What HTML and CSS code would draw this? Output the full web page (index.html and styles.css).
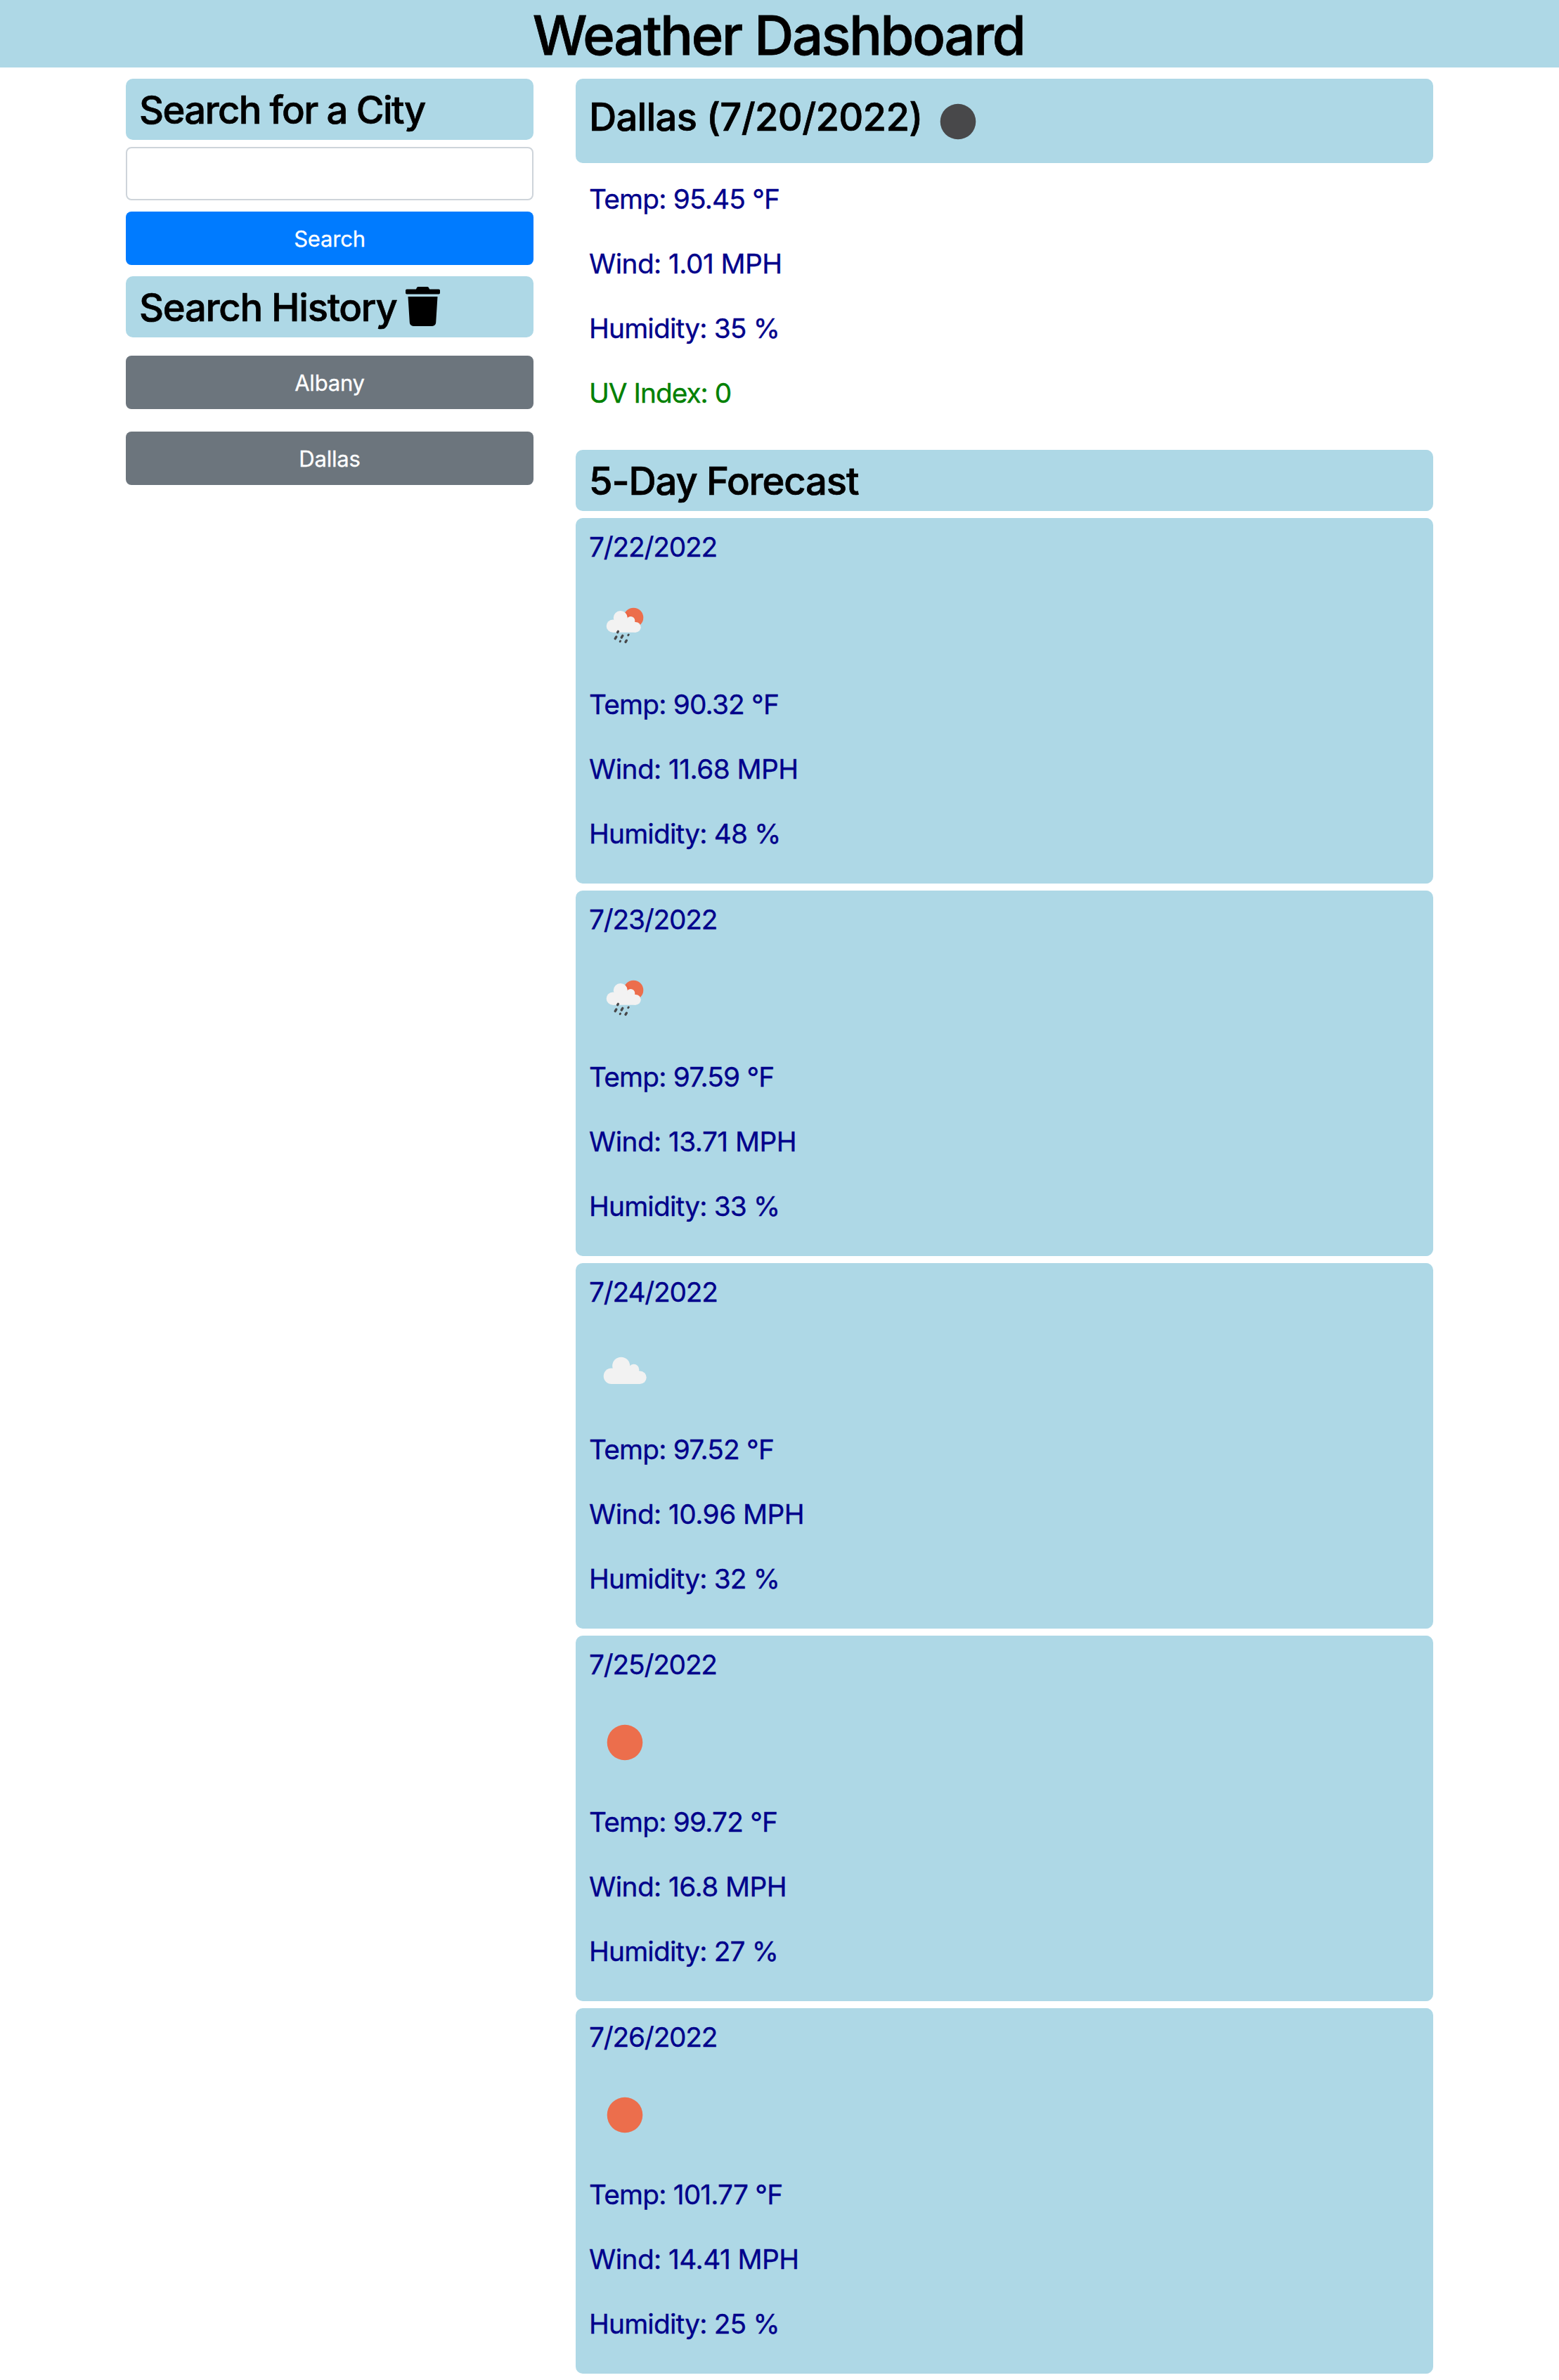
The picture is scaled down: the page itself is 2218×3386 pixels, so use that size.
FILE: index.html
```html
<!DOCTYPE html>
<html lang="en">
<head>
  <meta charset="utf-8">
  <title>Weather Dashboard</title>
  <link rel="stylesheet" href="styles.css">
</head>
<body>
  <svg width="0" height="0" class="sprite" aria-hidden="true">
    <defs>
      <linearGradient id="sunShade" x1="1" y1="0" x2="0" y2="1">
        <stop offset="0.5" stop-color="#ec6e4c"/>
        <stop offset="0.75" stop-color="#ee4f2c"/>
      </linearGradient>
      <g id="cloud" fill="#f2f2f2">
        <circle cx="31" cy="58.7" r="11.3"/>
        <circle cx="44.7" cy="44.2" r="12.5"/>
        <circle cx="62.7" cy="49.3" r="7.6"/>
        <circle cx="71.5" cy="60.8" r="9.2"/>
        <path d="M31 70V50l6-3h27l7.5 5v18z"/>
      </g>
    </defs>
    <symbol id="clear" viewBox="0 0 100 100"><circle cx="50" cy="50" r="25.3" fill="#ec6e4c"/></symbol>
    <symbol id="clear-night" viewBox="0 0 100 100"><circle cx="50" cy="50" r="25.3" fill="#48484a"/></symbol>
    <symbol id="cloudy" viewBox="0 0 100 100"><use href="#cloud"/></symbol>
    <symbol id="rain" viewBox="0 0 100 100">
      <circle cx="62.3" cy="39.7" r="14" fill="url(#sunShade)"/>
      <use href="#cloud" transform="translate(7.9 4.5) scale(.803)"/>
      <g stroke="#48484a" stroke-width="3.4" stroke-linecap="round">
        <path d="M40.4 59.4l-.8 1.2M37.8 67l-1.6 2.6M46.8 65.4l-1.6 2.6M52.4 72.2l-1.4 2.2"/>
        <path d="M55.3 63.9l-.6.9M43.6 72.9l-.5.8" stroke-width="2.8"/>
      </g>
    </symbol>
  </svg>

  <header class="title"><h1>Weather Dashboard</h1></header>

  <main class="container">
    <aside class="sidebar">
      <h3 class="panel search-title">Search for a City</h3>
      <input class="city-input" type="text" aria-label="City">
      <button class="btn btn-primary">Search</button>
      <h3 class="panel history-title">Search History
        <svg class="trash" viewBox="0 0 448 512"><path d="M432 32H312l-9.4-18.7A24 24 0 0 0 281.1 0H166.8a23.72 23.72 0 0 0-21.4 13.3L136 32H16A16 16 0 0 0 0 48v32a16 16 0 0 0 16 16h416a16 16 0 0 0 16-16V48a16 16 0 0 0-16-16zM53.2 467a48 48 0 0 0 47.9 45h245.8a48 48 0 0 0 47.9-45L416 128H32z"/></svg>
      </h3>
      <div class="history">
        <button class="btn btn-secondary">Albany</button>
        <button class="btn btn-secondary">Dallas</button>
      </div>
    </aside>

    <section class="weather">
      <h3 class="panel current-title">Dallas (7/20/2022)<svg class="icon"><use href="#clear-night"/></svg></h3>
      <div class="current">
        <p class="temp">Temp: 95.45 °F</p>
        <p class="wind">Wind: 1.01 MPH</p>
        <p>Humidity: 35 %</p>
        <p class="uv">UV Index: 0</p>
      </div>
      <h3 class="panel forecast-title">5-Day Forecast</h3>
      <article class="panel day">
        <p class="date">7/22/2022</p>
        <svg class="icon"><use href="#rain"/></svg>
        <p class="temp">Temp: 90.32 °F</p>
        <p class="wind">Wind: 11.68 MPH</p>
        <p>Humidity: 48 %</p>
      </article>
      <article class="panel day">
        <p class="date">7/23/2022</p>
        <svg class="icon"><use href="#rain"/></svg>
        <p class="temp">Temp: 97.59 °F</p>
        <p class="wind">Wind: 13.71 MPH</p>
        <p>Humidity: 33 %</p>
      </article>
      <article class="panel day">
        <p class="date">7/24/2022</p>
        <svg class="icon"><use href="#cloudy"/></svg>
        <p class="temp">Temp: 97.52 °F</p>
        <p class="wind">Wind: 10.96 MPH</p>
        <p>Humidity: 32 %</p>
      </article>
      <article class="panel day">
        <p class="date">7/25/2022</p>
        <svg class="icon"><use href="#clear"/></svg>
        <p class="temp">Temp: 99.72 °F</p>
        <p class="wind">Wind: 16.8 MPH</p>
        <p>Humidity: 27 %</p>
      </article>
      <article class="panel day">
        <p class="date">7/26/2022</p>
        <svg class="icon"><use href="#clear"/></svg>
        <p class="temp">Temp: 101.77 °F</p>
        <p class="wind">Wind: 14.41 MPH</p>
        <p>Humidity: 25 %</p>
      </article>
    </section>
  </main>
</body>
</html>
```
FILE: styles.css
```css
* { box-sizing: border-box; }

body {
  margin: 0;
  background: #fff;
  color: #000;
  font-family: Inter, "Liberation Sans", sans-serif;
}

h1, h3, p { margin: 0; }

.sprite { display: block; height: 0; }

.title {
  height: 96px;
  background: #aed8e6;
  text-align: center;
}

.title h1 {
  padding-right: 3px;
  font-size: 77.6px;
  font-weight: 500;
  line-height: 100px;
  letter-spacing: -2.28px;
  -webkit-text-stroke: 0.8px currentColor;
}

.container {
  display: grid;
  grid-template-columns: 580px 1220px;
  column-gap: 60px;
  align-items: start;
  width: 1860px;
  margin: 16px auto 0;
}

.sidebar, .weather, .history {
  display: flex;
  flex-direction: column;
}

.panel {
  padding: 10px 20px;
  border-radius: 10px;
  background: #aed8e6;
}

h3 {
  height: 87px;
  font-size: 54.3px;
  font-weight: 500;
  line-height: 69px;
  text-indent: -1px;
  white-space: nowrap;
  -webkit-text-stroke: 0.7px currentColor;
}

.search-title { letter-spacing: -1.6px; }

.city-input {
  height: 76px;
  margin-top: 10px;
  padding: 12px 24px;
  border: 2px solid #ced4da;
  border-radius: 8px;
  background: #fff;
  font: inherit;
}

.btn {
  height: 76px;
  padding: 0;
  border: 0;
  border-radius: 8px;
  color: #fff;
  font-family: inherit;
  font-size: 31px;
  line-height: 77px;
  letter-spacing: -0.2px;
  -webkit-text-stroke: 0.3px currentColor;
}

.btn-primary {
  margin: 16px 0;
  background: #007bff;
}

.btn-secondary { background: #6c757d; }

.history-title {
  display: flex;
  gap: 13px;
  letter-spacing: -1.25px;
}

.trash {
  width: 49px;
  height: 56px;
  margin-top: 5px;
}

.history {
  gap: 32px;
  margin-top: 26px;
}

h3.current-title {
  display: flex;
  gap: 1px;
  height: 120px;
  line-height: 88px;
  letter-spacing: -0.7px;
}

.icon {
  display: block;
  width: 100px;
  height: 100px;
}

.current-title .icon { margin-top: 1px; }

.current, .day {
  display: flex;
  flex-direction: column;
  gap: 32px;
  color: darkblue;
  font-size: 38.8px;
  line-height: 62px;
  letter-spacing: -0.8px;
  text-indent: -1px;
  -webkit-text-stroke: 0.35px currentColor;
}

.current p, .day p { margin-bottom: -2px; }

.current { padding: 20px 20px 52px; }

.uv { color: green; letter-spacing: -1px; }

.forecast-title { letter-spacing: -1.1px; }

.day {
  height: 520px;
  margin-top: 10px;
}

.date { letter-spacing: -1.2px; }
.temp { letter-spacing: -0.8px; }
.wind { letter-spacing: -0.55px; }
```
